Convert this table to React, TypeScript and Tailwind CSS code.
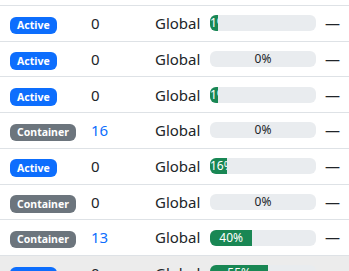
import React from "react";

type Row = {
  status: "Active" | "Container";
  count: number;
  scope: string;
  pct: number;
  label: string;
  hover?: boolean;
};

const ROWS: Row[] = [
  { status: "Active", count: 0, scope: "Global", pct: 7.5, label: "1%" },
  { status: "Active", count: 0, scope: "Global", pct: 0, label: "0%" },
  { status: "Active", count: 0, scope: "Global", pct: 7.5, label: "1%" },
  { status: "Container", count: 16, scope: "Global", pct: 0, label: "0%" },
  { status: "Active", count: 0, scope: "Global", pct: 16, label: "16%" },
  { status: "Container", count: 0, scope: "Global", pct: 0, label: "0%" },
  { status: "Container", count: 13, scope: "Global", pct: 40, label: "40%" },
  { status: "Active", count: 0, scope: "Global", pct: 55, label: "55%", hover: true },
];

function Badge({ status }: { status: Row["status"] }) {
  return (
    <span
      className={
        "inline-block rounded-[6px] px-[7px] py-[3.5px] text-[10.5px] font-bold leading-none text-white " +
        (status === "Active" ? "bg-[#0d6efd]" : "bg-[#6c757d]")
      }
    >
      {status}
    </span>
  );
}

function Progress({ pct, label }: { pct: number; label: string }) {
  return (
    <div className="relative flex h-4 w-[106px] overflow-hidden rounded-[6px] bg-[#e9ecef] text-[12px] leading-none">
      {pct > 0 ? (
        <div
          className="flex h-full items-center justify-center overflow-hidden whitespace-nowrap bg-[#198754] text-white"
          style={{ width: `${pct}%` }}
        >
          <span className="min-w-0">{label}</span>
        </div>
      ) : (
        <span className="absolute inset-0 flex items-center justify-center text-[#212529]">
          {label}
        </span>
      )}
    </div>
  );
}

export default function App() {
  return (
    <div className="h-[271px] w-[349px] overflow-hidden bg-white font-['Noto_Sans',sans-serif] text-[15px] text-[#212529]">
      <div className="h-[5px]" />
      {ROWS.map((r, i) => (
        <div
          key={i}
          className={
            "box-border flex h-[35.71px] items-center border-t border-[#dee2e6] " +
            (r.hover ? "bg-[#ececec]" : "")
          }
        >
          <div className="w-[91px] pl-[10px]">
            <Badge status={r.status} />
          </div>
          <div className={"w-[64px] " + (r.count > 0 ? "text-[#0d6efd]" : "")}>
            {r.count}
          </div>
          <div className="w-[55px]">{r.scope}</div>
          <Progress pct={r.pct} label={r.label} />
          <div className="ml-[9px]">—</div>
        </div>
      ))}
    </div>
  );
}
